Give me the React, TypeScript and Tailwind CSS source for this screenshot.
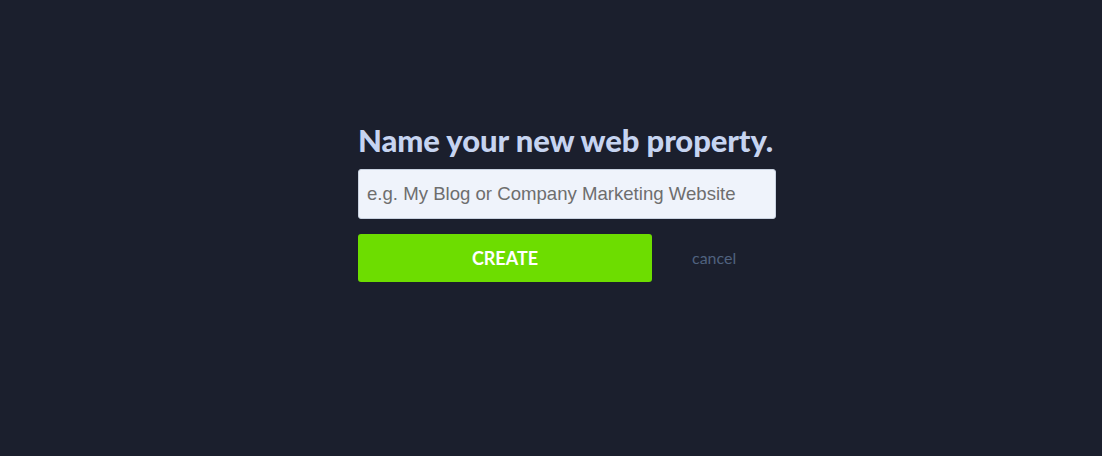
export default function App() {
  return (
    <div className="flex h-[456px] w-full items-start justify-center bg-[#1b1f2d] pl-[32px] pt-[122px]">
      <form className="flex w-[418px] flex-col" onSubmit={(e) => e.preventDefault()}>
        <h1 className="mb-[11px] whitespace-nowrap font-['Lato',sans-serif] text-[31px] font-black leading-[36px] tracking-[-0.1px] text-[#c6d4f1]">
          Name your new web property.
        </h1>
        <input
          type="text"
          placeholder="e.g. My Blog or Company Marketing Website"
          className="h-[50px] w-full rounded-[3px] border border-[#c9d2e0] bg-[#eff3fb] px-[8px] font-['Liberation_Sans',sans-serif] text-[18.6px] text-[#333] outline-none placeholder:text-[#6e6e6e]"
        />
        <div className="mt-[15px] flex items-center">
          <button
            type="submit"
            className="h-[48px] w-[294px] rounded-[3px] bg-[#6ddd00] font-['Lato',sans-serif] text-[18px] font-bold text-white"
          >
            CREATE
          </button>
          <button
            type="button"
            className="ml-[40px] font-['Lato',sans-serif] text-[16px] text-[#50627f]"
          >
            cancel
          </button>
        </div>
      </form>
    </div>
  );
}
